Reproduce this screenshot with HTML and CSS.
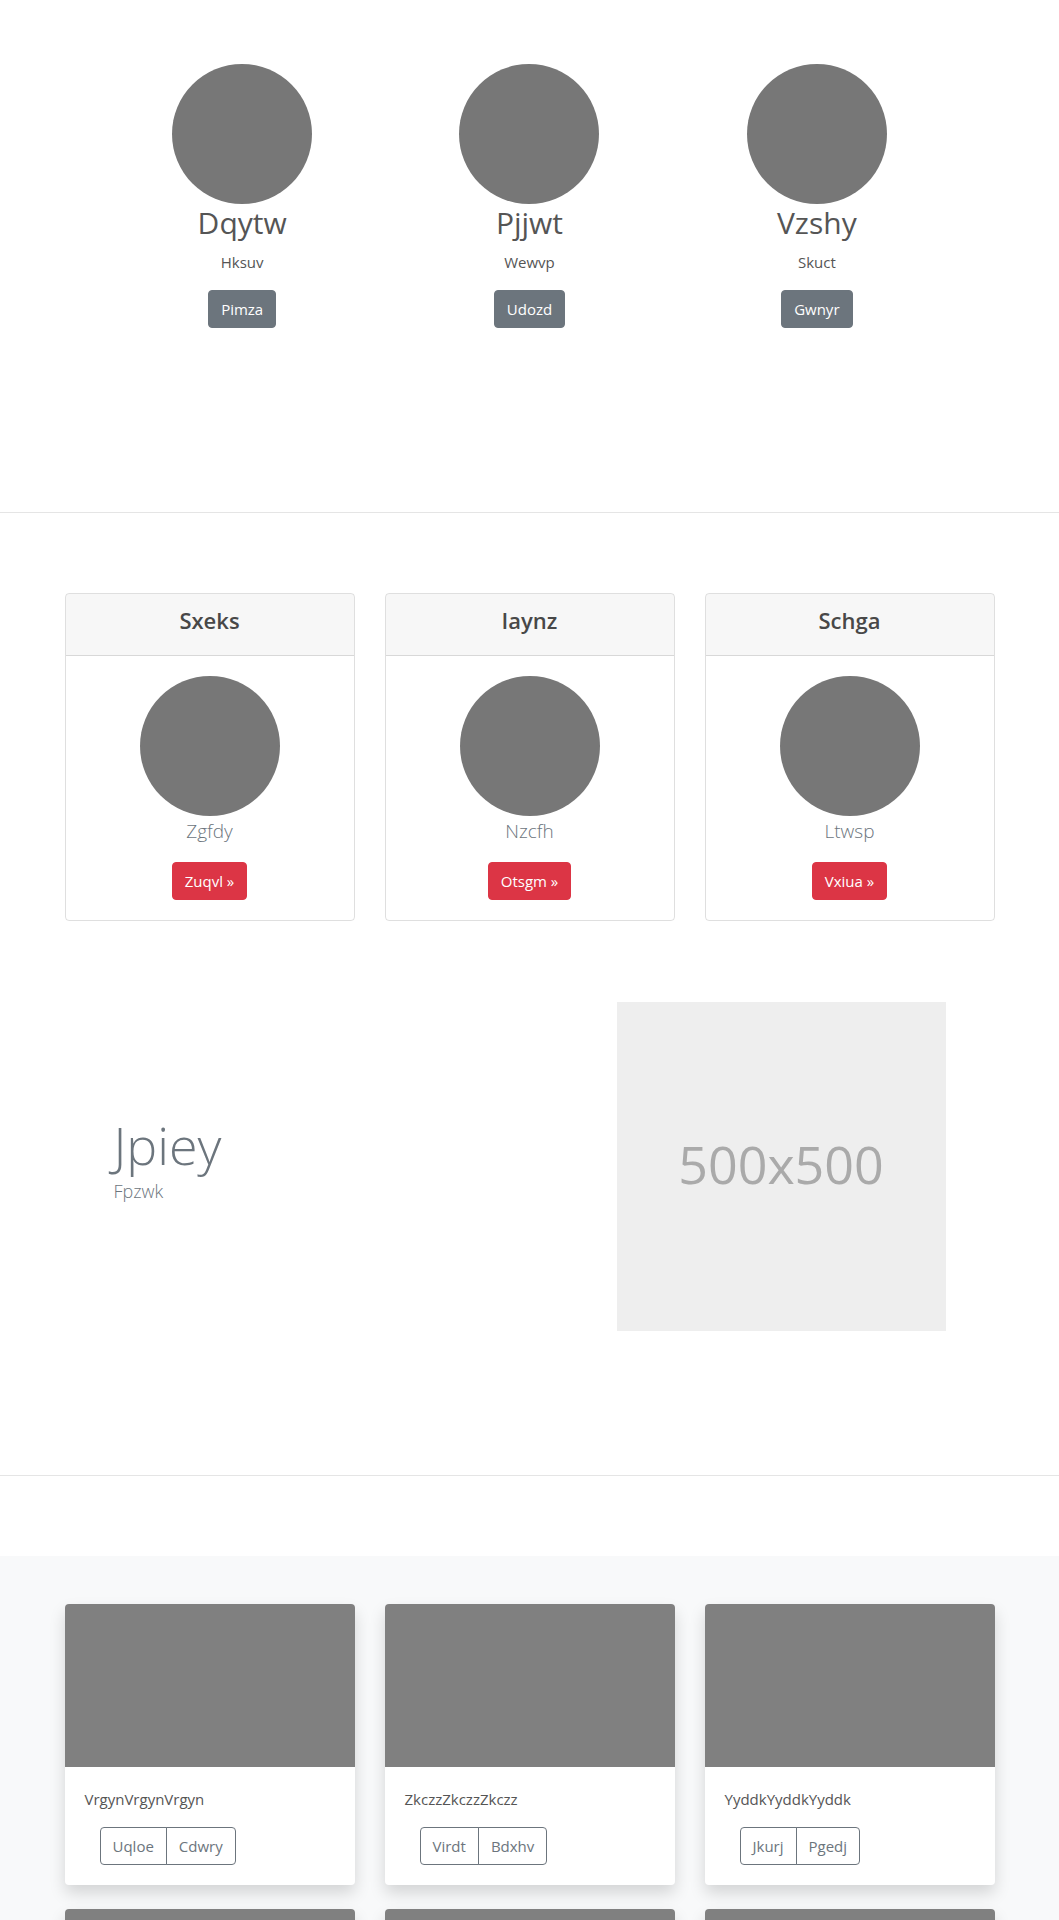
FILE: index.html
```html
<!DOCTYPE html>
<html lang="en">
<head>
    <meta charset="UTF-8">
    <meta name="viewport" content="width=device-width, initial-scale=1.0">
    <title>Dqytw</title>
    <link rel="stylesheet" href="styles.css">
</head>
<body>
    <!-- Team -->
    <section class="team">
        <div class="team-row">
            <div class="member">
                <div class="avatar"></div>
                <h2>Dqytw</h2>
                <p>Hksuv</p>
                <a class="btn btn-secondary" href="#">Pimza</a>
            </div>
            <div class="member">
                <div class="avatar"></div>
                <h2>Pjjwt</h2>
                <p>Wewvp</p>
                <a class="btn btn-secondary" href="#">Udozd</a>
            </div>
            <div class="member">
                <div class="avatar"></div>
                <h2>Vzshy</h2>
                <p>Skuct</p>
                <a class="btn btn-secondary" href="#">Gwnyr</a>
            </div>
        </div>
    </section>

    <hr>

    <!-- Plans -->
    <section class="plans container">
        <div class="plan-grid">
            <div class="plan">
                <div class="plan-header"><h4>Sxeks</h4></div>
                <div class="plan-body">
                    <div class="avatar"></div>
                    <p class="lead">Zgfdy</p>
                    <a class="btn btn-danger" href="#">Zuqvl &raquo;</a>
                </div>
            </div>
            <div class="plan">
                <div class="plan-header"><h4>Iaynz</h4></div>
                <div class="plan-body">
                    <div class="avatar"></div>
                    <p class="lead">Nzcfh</p>
                    <a class="btn btn-danger" href="#">Otsgm &raquo;</a>
                </div>
            </div>
            <div class="plan">
                <div class="plan-header"><h4>Schga</h4></div>
                <div class="plan-body">
                    <div class="avatar"></div>
                    <p class="lead">Ltwsp</p>
                    <a class="btn btn-danger" href="#">Vxiua &raquo;</a>
                </div>
            </div>
        </div>
    </section>

    <!-- Feature -->
    <section class="feature container">
        <div class="feature-row">
            <div class="feature-text">
                <h1>Jpiey</h1>
                <p>Fpzwk</p>
            </div>
            <div class="feature-media">
                <div class="placeholder">500x500</div>
            </div>
        </div>
    </section>

    <hr class="rule-wide">

    <!-- Album -->
    <section class="album">
        <div class="container">
            <div class="album-grid">
                <div class="photo-card">
                    <div class="photo"></div>
                    <div class="photo-body">
                        <p>VrgynVrgynVrgyn</p>
                        <div class="btn-group">
                            <a class="btn btn-outline" href="#">Uqloe</a>
                            <a class="btn btn-outline" href="#">Cdwry</a>
                        </div>
                    </div>
                </div>
                <div class="photo-card">
                    <div class="photo"></div>
                    <div class="photo-body">
                        <p>ZkczzZkczzZkczz</p>
                        <div class="btn-group">
                            <a class="btn btn-outline" href="#">Virdt</a>
                            <a class="btn btn-outline" href="#">Bdxhv</a>
                        </div>
                    </div>
                </div>
                <div class="photo-card">
                    <div class="photo"></div>
                    <div class="photo-body">
                        <p>YyddkYyddkYyddk</p>
                        <div class="btn-group">
                            <a class="btn btn-outline" href="#">Jkurj</a>
                            <a class="btn btn-outline" href="#">Pgedj</a>
                        </div>
                    </div>
                </div>
                <div class="photo-card">
                    <div class="photo"></div>
                </div>
                <div class="photo-card">
                    <div class="photo"></div>
                </div>
                <div class="photo-card">
                    <div class="photo"></div>
                </div>
            </div>
        </div>
    </section>
</body>
</html>
```

FILE: styles.css
```css
* {
    box-sizing: border-box;
}

body {
    margin: 0;
    font-family: "Open Sans", "Noto Sans", sans-serif;
    font-size: 15px;
    line-height: 24px;
    color: #555;
    background-color: #ffffff;
}

.container {
    width: 960px;
    margin: 0 auto;
    padding: 0 15px;
}

hr {
    margin: 16px 0;
    border: 0;
    border-top: 1px solid rgba(0, 0, 0, 0.1);
}

.rule-wide {
    margin-bottom: 80px;
}

.avatar {
    width: 140px;
    height: 140px;
    margin: 0 auto;
    border-radius: 50%;
    background-color: #777;
}

.btn {
    display: inline-block;
    padding: 6px 12px;
    border: 1px solid transparent;
    border-radius: 4px;
    font-size: 15px;
    line-height: 24px;
    text-decoration: none;
}

.btn-secondary {
    background-color: #6c757d;
    border-color: #6c757d;
    color: #ffffff;
}

.btn-danger {
    background-color: #dc3545;
    border-color: #dc3545;
    color: #ffffff;
}

.btn-outline {
    background-color: transparent;
    border-color: #6c757d;
    color: #6c757d;
}

/* team */
.team {
    padding: 64px 0 168px;
}

.team-row {
    width: 862px;
    margin: 0 auto;
    display: grid;
    grid-template-columns: repeat(3, 1fr);
    text-align: center;
}

.member h2 {
    margin: 0 0 8px;
    font-size: 30px;
    font-weight: 400;
    line-height: 38px;
}

.member p {
    margin: 0 0 16px;
}

/* plans */
.plans {
    padding-top: 64px;
}

.plan-grid {
    display: grid;
    grid-template-columns: repeat(3, 1fr);
    gap: 30px;
}

.plan {
    border: 1px solid rgba(0, 0, 0, 0.125);
    border-radius: 4px;
    text-align: center;
    overflow: hidden;
}

.plan-header {
    padding: 12px 20px;
    background-color: rgba(0, 0, 0, 0.03);
    border-bottom: 1px solid rgba(0, 0, 0, 0.125);
}

.plan-header h4 {
    margin: 0 0 8px;
    font-size: 22px;
    font-weight: 600;
    line-height: 29px;
    color: #484848;
}

.plan-body {
    padding: 20px;
}

.lead {
    margin: 0 0 16px;
    font-size: 19px;
    font-weight: 300;
    line-height: 30px;
    color: #6c757d;
}

/* feature */
.feature {
    padding-top: 81px;
    padding-bottom: 128px;
}

.feature-row {
    display: flex;
    align-items: center;
    gap: 30px;
}

.feature-text {
    flex: 1;
    padding-left: 49px;
}

.feature-text h1 {
    margin: 0 0 3px;
    font-size: 52px;
    font-weight: 300;
    line-height: 62px;
    color: #6c757d;
}

.feature-text p {
    margin: 0 0 16px;
    font-size: 18px;
    font-weight: 300;
    line-height: 24px;
    color: #6c757d;
}

.feature-media {
    flex: 1;
    display: flex;
    justify-content: flex-end;
    padding-right: 49px;
}

.placeholder {
    width: 329px;
    height: 329px;
    padding-bottom: 6px;
    display: flex;
    align-items: center;
    justify-content: center;
    background-color: #eeeeee;
    color: #aaaaaa;
    font-size: 52px;
}

/* album */
.album {
    padding: 48px 0;
    background-color: #f8f9fa;
}

.album-grid {
    display: grid;
    grid-template-columns: repeat(3, 1fr);
    column-gap: 30px;
    row-gap: 24px;
}

.photo-card {
    background-color: #ffffff;
    border-radius: 4px;
    box-shadow: 0 8px 16px rgba(0, 0, 0, 0.15);
    overflow: hidden;
}

.photo {
    height: 163px;
    background-color: #808080;
}

.photo-body {
    padding: 20px;
}

.photo-body p {
    margin: 0 0 16px;
}

.btn-group {
    display: inline-flex;
    margin-left: 15px;
}

.btn-group .btn:first-child {
    border-radius: 4px 0 0 4px;
}

.btn-group .btn:last-child {
    margin-left: -1px;
    border-radius: 0 4px 4px 0;
}
```
